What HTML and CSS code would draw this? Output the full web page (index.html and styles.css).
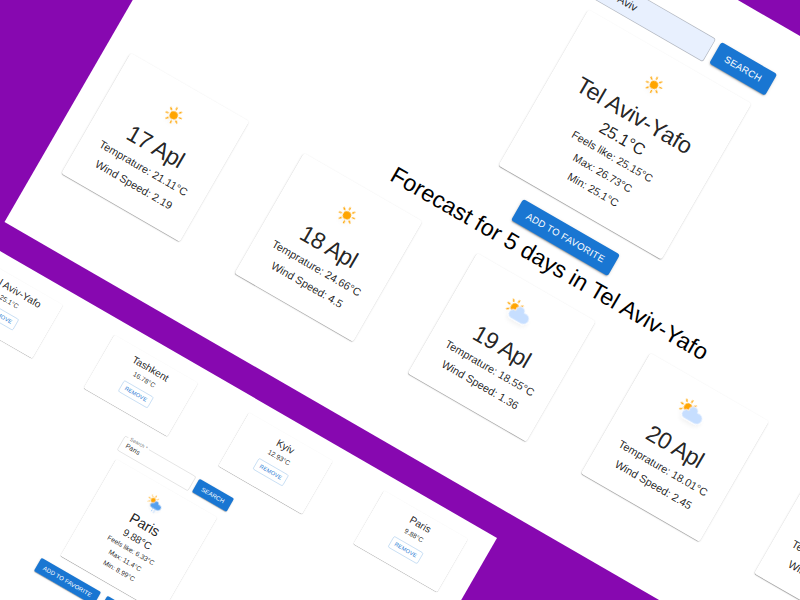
FILE: index.html
```
<!DOCTYPE html>
<html lang="en">
<head>
<meta charset="utf-8">
<title>Weather</title>
<link rel="stylesheet" href="styles.css">
</head>
<body>
<svg class="defs" width="0" height="0" aria-hidden="true">
  <defs>
    <filter id="soft" x="-24%" y="-20%" width="150%" height="160%">
      <feGaussianBlur in="SourceAlpha" stdDeviation="3"/>
      <feOffset dx="0" dy="4" result="o"/>
      <feComponentTransfer><feFuncA type="linear" slope="0.05"/></feComponentTransfer>
      <feMerge><feMergeNode/><feMergeNode in="SourceGraphic"/></feMerge>
    </filter>
    <g id="sun" stroke="orange" stroke-width="2" stroke-linecap="round">
      <path fill="none" d="M0 9v3M0-9v-3M9 0h3M-9 0h-3M6.36 6.36l2.12 2.12M-6.36 6.36l-2.12 2.12M6.36-6.36l2.12-2.12M-6.36-6.36l-2.12-2.12"/>
      <circle r="5" fill="orange"/>
    </g>
    <path id="cloud" stroke="#fff" stroke-linejoin="round" stroke-width="1.2" d="M47.7,35.4c0-4.6-3.7-8.2-8.2-8.2c-1,0-1.9,0.2-2.8,0.5c-0.3-3.4-3.1-6.2-6.6-6.2c-3.7,0-6.7,3-6.7,6.7c0,0.8,0.2,1.6,0.4,2.3c-0.3-0.1-0.7-0.1-1-0.1c-3.7,0-6.7,3-6.7,6.7c0,3.6,2.9,6.6,6.5,6.7l17.2,0C44.2,43.3,47.7,39.8,47.7,35.4z"/>
    <symbol id="clear" viewBox="0 0 64 64"><g filter="url(#soft)"><use href="#sun" transform="translate(32 32.5) rotate(-6)"/></g></symbol>
    <symbol id="cloudy" viewBox="0 0 64 64"><g filter="url(#soft)"><use href="#sun" transform="translate(19.5 26.5) rotate(6)"/><use href="#cloud" fill="#c6deff" transform="translate(-.8 -1)"/></g></symbol>
    <symbol id="rainy" viewBox="0 0 64 64"><g filter="url(#soft)"><use href="#sun" transform="translate(18.5 25.5) rotate(6)"/><path d="M27 41v8M33 42v8" stroke="#91c0f8" stroke-width="2" stroke-linecap="round" stroke-dasharray="3 4" fill="none"/><use href="#cloud" fill="#57a0ee" transform="translate(3 4.5) scale(.86)"/></g></symbol>
  </defs>
</svg>
<main class="stage">
  <section class="board board-main">
    <form class="search">
      <div class="field filled"><span class="label">Search *</span>Tel Aviv</div>
      <div class="btn">SEARCH</div>
    </form>
    <article class="card current">
      <svg class="icon"><use href="#clear"/></svg>
      <h2 class="h4">Tel Aviv-Yafo</h2>
      <p class="h5">25.1°C</p>
      <p>Feels like: 25.15°C</p>
      <p>Max: 26.73°C</p>
      <p>Min: 25.1°C</p>
    </article>
    <div class="actions"><div class="btn">ADD TO FAVORITE</div></div>
    <h1 class="h4 title">Forecast for 5 days in Tel Aviv-Yafo</h1>
    <div class="forecast">
      <article class="card day"><svg class="icon"><use href="#clear"/></svg><h2 class="h4">17 Apl</h2><p>Temprature: 21.11°C</p><p>Wind Speed: 2.19</p></article>
      <article class="card day"><svg class="icon"><use href="#clear"/></svg><h2 class="h4">18 Apl</h2><p>Temprature: 24.66°C</p><p>Wind Speed: 4.5</p></article>
      <article class="card day"><svg class="icon"><use href="#cloudy"/></svg><h2 class="h4">19 Apl</h2><p>Temprature: 18.55°C</p><p>Wind Speed: 1.36</p></article>
      <article class="card day"><svg class="icon"><use href="#cloudy"/></svg><h2 class="h4">20 Apl</h2><p>Temprature: 18.01°C</p><p>Wind Speed: 2.45</p></article>
      <article class="card day"><svg class="icon"><use href="#cloudy"/></svg><h2 class="h4">21 Apl</h2><p>Temprature: 18.22°C</p><p>Wind Speed: 2.31</p></article>
    </div>
  </section>

  <section class="board board-favorites">
    <div class="favorites">
      <article class="card city"><h3 class="h5">Tel Aviv-Yafo</h3><p>25.1°C</p><div class="btn-outline">REMOVE</div></article>
      <article class="card city"><h3 class="h5">Tashkent</h3><p>16.78°C</p><div class="btn-outline">REMOVE</div></article>
      <article class="card city"><h3 class="h5">Kyiv</h3><p>12.93°C</p><div class="btn-outline">REMOVE</div></article>
      <article class="card city"><h3 class="h5">Paris</h3><p>9.88°C</p><div class="btn-outline">REMOVE</div></article>
    </div>
    <form class="search">
      <div class="field"><span class="label">Search *</span>Paris</div>
      <div class="btn">SEARCH</div>
    </form>
    <article class="card current">
      <svg class="icon"><use href="#rainy"/></svg>
      <h2 class="h4">Paris</h2>
      <p class="h5">9.88°C</p>
      <p>Feels like: 6.33°C</p>
      <p>Max: 11.4°C</p>
      <p>Min: 8.99°C</p>
    </article>
    <div class="actions"><div class="btn">ADD TO FAVORITE</div><div class="btn btn-wide"></div></div>
  </section>
</main>
</body>
</html>
```
FILE: styles.css
```
* { box-sizing: border-box; }
html, body { margin: 0; height: 100%; overflow: hidden; }
body { font-family: "Liberation Sans", Arial, sans-serif; font-size: 16px; color: rgba(0, 0, 0, .87); }
h1, h2, h3, p { margin: 0; font-weight: 400; }
.defs { position: absolute; }

.stage { position: relative; width: 800px; height: 600px; overflow: hidden; background: #8708b0; }

/* Tilted page sheets placed on the purple canvas */
.board { position: absolute; background: #fff; display: flex; flex-direction: column; }
.board-main {
  left: 283.8px; top: -262.3px; width: 1441px; height: 815.5px; padding-top: 64.7px;
  align-items: center; transform-origin: 0 0; transform: rotate(30deg) scale(.685);
}
.board-favorites {
  left: -964px; top: 537.5px; width: 1461px; height: 900px; padding-top: 36px;
  align-items: center; transform-origin: 100% 0; transform: rotate(30deg) scale(.425);
}

.search { display: flex; align-items: flex-start; gap: 9px; height: 56.5px; margin-left: 1px; }
.board-favorites .search { height: 58px; margin-top: 48px; }
.field {
  position: relative; width: 193px; height: 39px; padding: 0 14px; line-height: 37px;
  border: 1px solid rgba(0, 0, 0, .23); border-radius: 4px; letter-spacing: .15px;
}
.board-favorites .field { padding: 0 12px; line-height: 35px; letter-spacing: 0; }
.filled { background: #e8f0fe; }
.label {
  position: absolute; left: 8px; top: -8px; padding: 0 5px; background: #fff;
  font-size: 12px; line-height: 14px; color: rgba(0, 0, 0, .6);
}
.btn {
  height: 36px; padding: 0 16px; border-radius: 4px; background: #1976d2; color: #fff;
  font-size: 14px; line-height: 36px; letter-spacing: .38px; white-space: nowrap;
  box-shadow: 0 3px 1px -2px rgba(0, 0, 0, .2), 0 2px 2px rgba(0, 0, 0, .14), 0 1px 5px rgba(0, 0, 0, .12);
}
.search .btn { padding: 0 16.5px; }
.btn-wide { width: 170px; }
.actions { display: flex; gap: 17px; margin-top: 23.6px; }
.board-favorites .actions { margin-top: 26px; }

.card {
  display: flex; flex-direction: column; align-items: center; flex: none;
  padding: 16px 16px 24px; border-radius: 4px; background: #fff;
  line-height: 28px; letter-spacing: -.04px; white-space: nowrap;
  box-shadow: 0 2px 1px -1px rgba(0, 0, 0, .2), 0 1px 1px rgba(0, 0, 0, .14), 0 1px 3px rgba(0, 0, 0, .12);
}
.current { width: 275px; }
.board-favorites .current { margin-left: -2px; }
.day { width: 200px; }
.icon { width: 64px; height: 64px; margin: -1px 0 0; overflow: visible; }
.h4 { font-size: 34px; line-height: 42px; letter-spacing: -.3px; margin-bottom: 2px; }
.current .h4 { position: relative; left: -2px; }
.h5 { font-size: 24px; line-height: 32px; letter-spacing: -.1px; }
.day .h4 { letter-spacing: -.7px; padding-right: 1px; }
.title { color: #000; margin: 5.5px 2px 0 0; letter-spacing: 0; white-space: nowrap; }

.forecast { display: flex; gap: 92px; align-self: flex-start; margin: 19px 0 0 36.2px; }

.favorites { display: flex; gap: 138.6px; align-self: flex-end; margin-right: 58px; }
.city { width: 228px; height: 145px; padding-top: 11px; line-height: 24px; }
.city .h5 { margin-bottom: 2px; }
.btn-outline {
  height: 30px; margin-top: 12px; padding: 0 10px; border: 1px solid rgba(25, 118, 210, .5); border-radius: 4px;
  color: #1976d2; font-size: 13px; line-height: 28px; letter-spacing: .37px;
}
```
